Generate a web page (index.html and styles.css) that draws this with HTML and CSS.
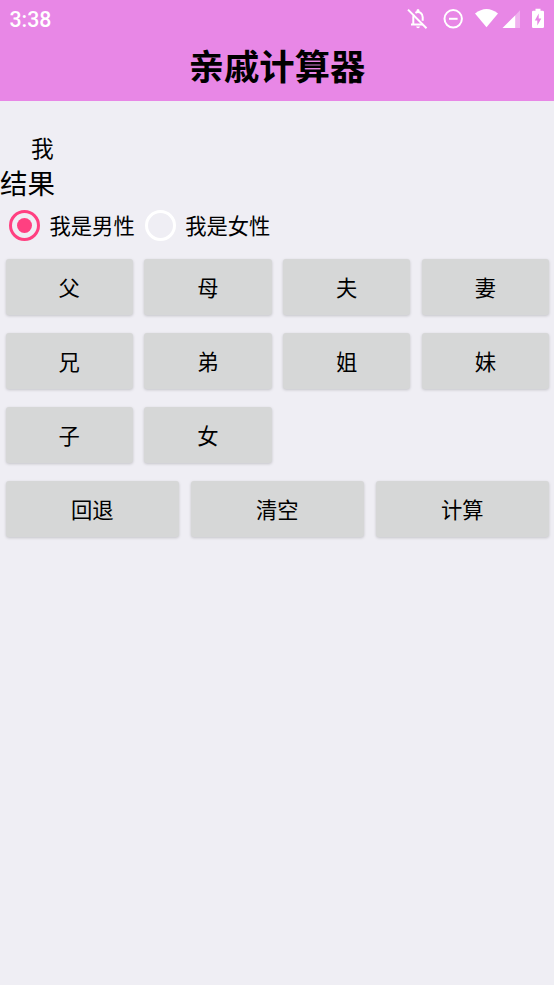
FILE: index.html
```html
<!DOCTYPE html>
<html lang="zh-CN">
<head>
<meta charset="utf-8">
<title>亲戚计算器</title>
<link rel="stylesheet" href="styles.css">
</head>
<body>
<header class="top">
  <div class="status">
    <span class="time">3:38</span>
    <svg class="status-icons" width="144" height="28" viewBox="0 0 144 28" fill="#fff">
      <g fill="none" stroke="#fff" stroke-width="2">
        <path d="M3.300 19.500V12.300Q3.300 10.800 3.900 9.600M5.400 7.900Q8 6.200 10.600 7.900Q12.700 9.400 12.700 12.300V15.700M1 19.500H12.800"/>
        <path d="M-2 4.600L16.500 23.200"/>
        <circle cx="43.200" cy="13.800" r="8.700"/>
        <path d="M39 13.800H47.600"/>
      </g>
      <path d="M6.500 7V5.500A1.500 1.500 0 0 1 9.500 5.500V7ZM6.100 21.600H10A2 2 0 0 1 6.100 21.600Z"/>
      <path d="M65 8.600Q76.500 -.4 88 8.600L76.500 22.200Z"/>
      <path d="M92.500 23L105.300 10.200V23Z"/>
      <path d="M105.300 10.200L110 5.300V23H105.300Z" opacity=".35"/>
      <path fill-rule="evenodd" d="M125.500 3.800H130.500V5.800H132.700Q134 5.800 134 7.100V21.700Q134 23 132.700 23H123.300Q122 23 122 21.700V7.100Q122 5.800 123.300 5.800H125.500ZM128.700 8.500L124.800 15.500H127.300V20.500L131.300 13.400H128.700Z"/>
    </svg>
  </div>
  <h1 class="title">亲戚计算器</h1>
</header>
<main>
  <div class="input">我</div>
  <div class="result">结果</div>
  <div class="radios">
    <label class="option"><span class="radio checked"></span><span class="label">我是男性</span></label>
    <label class="option"><span class="radio"></span><span class="label">我是女性</span></label>
  </div>
  <div class="grid relatives">
    <button>父</button><button>母</button><button>夫</button><button>妻</button>
    <button>兄</button><button>弟</button><button>姐</button><button>妹</button>
    <button>子</button><button>女</button>
  </div>
  <div class="grid actions">
    <button>回退</button><button>清空</button><button>计算</button>
  </div>
</main>
</body>
</html>
```
FILE: styles.css
```css
* { box-sizing: border-box; }
body {
  margin: 0;
  min-height: 985px;
  background: #efeef4;
  color: #000;
  font-family: "Noto Sans CJK SC", sans-serif;
}
.top {
  height: 101px;
  background: #e887e6;
}
.status {
  display: flex;
  justify-content: space-between;
  height: 38px;
  padding: 5px 0 0 9.5px;
}
.time {
  color: #fff;
  font: 500 21.3px/29px Roboto, sans-serif;
}
.status-icons {
  display: block;
  overflow: visible;
}
.title {
  margin: 0;
  font-size: 35.3px;
  line-height: 54px;
  font-weight: 700;
  text-align: center;
}
.input {
  margin-top: 30px;
  padding-left: 31px;
  font-size: 22.7px;
  line-height: 34px;
}
.result {
  font-size: 27.5px;
  line-height: 35px;
}
.radios {
  display: flex;
  height: 51px;
  padding-left: 9px;
  gap: 10px;
}
.option {
  display: flex;
  align-items: center;
  gap: 9.5px;
  font-size: 21.3px;
  line-height: 30px;
}
.label {
  padding-bottom: 1px;
}
.radio {
  width: 31px;
  height: 31px;
  border: 3px solid #fff;
  border-radius: 50%;
}
.radio.checked {
  display: grid;
  place-items: center;
  border-color: #ff4081;
}
.radio.checked::after {
  content: "";
  width: 15px;
  height: 15px;
  border-radius: 50%;
  background: #ff4081;
}
.grid {
  display: grid;
  gap: 18px 11.5px;
  padding: 0 5px 0 5.5px;
}
.relatives {
  grid-template-columns: repeat(4, 1fr);
  padding-top: 8px;
}
.actions {
  grid-template-columns: repeat(3, 1fr);
  margin-top: 18px;
}
button {
  height: 56px;
  padding: 0 0 1px;
  border: 0;
  border-radius: 3px;
  background: #d6d7d7;
  box-shadow: 0 1px 3px rgba(0, 0, 0, .18);
  color: #000;
  font: 400 21.3px/30px "Noto Sans CJK SC", sans-serif;
}
```
